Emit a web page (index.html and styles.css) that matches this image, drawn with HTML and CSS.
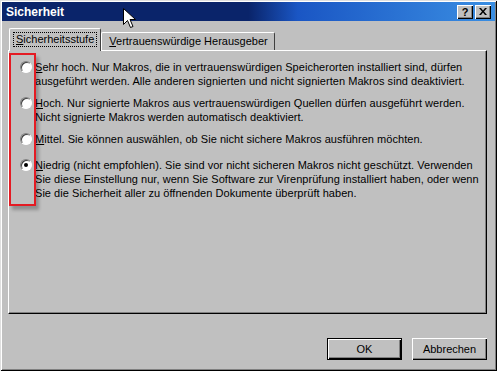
FILE: index.html
```html
<!DOCTYPE html>
<html lang="de">
<head>
    <meta charset="UTF-8">
    <meta name="viewport" content="width=device-width, initial-scale=1.0">
    <title>Sicherheit</title>
    <link rel="stylesheet" href="styles.css">
</head>
<body>
    <div class="window">
        <div class="titlebar">
            <span class="title">Sicherheit</span>
            <div class="caption-buttons">
                <span class="cap-btn">?</span>
                <span class="cap-btn">
                    <svg width="8" height="7" viewBox="0 0 8 7">
                        <path d="M0 0h2l2 2.5L6 0h2L5 3.5 8 7H6L4 4.5 2 7H0l3-3.5z" fill="#000"/>
                    </svg>
                </span>
            </div>
            <svg class="cursor" width="13" height="21" viewBox="0 0 13 21">
                <path d="M0.5 0.5v16l4-4 3 7 2.5-1-3-7h5.5z" fill="#fff" stroke="#000" stroke-width="1"/>
            </svg>
        </div>

        <div class="content">
            <div class="tabs">
                <div class="tab active"><span class="focus"><u>S</u>icherheitsstufe</span></div>
                <div class="tab"><u>V</u>ertrauenswürdige Herausgeber</div>
            </div>

            <div class="panel">
                <div class="options">
                    <div class="option">
                        <span class="radio"></span>
                        <p><u>S</u>ehr hoch. Nur Makros, die in vertrauenswürdigen Speicherorten installiert sind, dürfen<br>ausgeführt werden. Alle anderen signierten und nicht signierten Makros sind deaktiviert.</p>
                    </div>
                    <div class="option">
                        <span class="radio"></span>
                        <p><u>H</u>och. Nur signierte Makros aus vertrauenswürdigen Quellen dürfen ausgeführt werden.<br>Nicht signierte Makros werden automatisch deaktiviert.</p>
                    </div>
                    <div class="option">
                        <span class="radio"></span>
                        <p><u>M</u>ittel. Sie können auswählen, ob Sie nicht sichere Makros ausführen möchten.</p>
                    </div>
                    <div class="option">
                        <span class="radio checked"></span>
                        <p><u>N</u>iedrig (nicht empfohlen). Sie sind vor nicht sicheren Makros nicht geschützt. Verwenden<br>Sie diese Einstellung nur, wenn Sie Software zur Virenprüfung installiert haben, oder wenn<br>Sie die Sicherheit aller zu öffnenden Dokumente überprüft haben.</p>
                    </div>
                </div>
                <div class="highlight"></div>
            </div>

            <div class="footer">
                <button class="button default" type="button">OK</button>
                <button class="button" type="button">Abbrechen</button>
            </div>
        </div>
    </div>
</body>
</html>
```

FILE: styles.css
```css
body {
    margin: 0;
    padding: 0;
    background-color: #c0c0c0;
    font-family: Tahoma, "Liberation Sans", Arial, sans-serif;
    font-size: 11px;
    color: #000;
}

.window {
    width: 497px;
    height: 371px;
    box-sizing: border-box;
    padding: 2px;
    display: flex;
    flex-direction: column;
    background-color: #c0c0c0;
    box-shadow: inset 1px 1px 0 #dfdfdf, inset -1px -1px 0 #000,
                inset 2px 2px 0 #fff, inset -2px -2px 0 #808080;
}

.titlebar {
    position: relative;
    height: 19px;
    flex-shrink: 0;
    display: flex;
    align-items: center;
    justify-content: space-between;
    padding: 0 4px 0 4px;
    background: linear-gradient(to right, #0a246a 0%, #0a246a 50%, #1a56c4 60%, #3a8ee2 100%);
}

.title {
    color: #fff;
    font-weight: bold;
    font-size: 12px;
    padding-top: 1px;
}

.caption-buttons {
    display: flex;
    gap: 2px;
}

.cap-btn {
    width: 16px;
    height: 14px;
    box-sizing: border-box;
    display: flex;
    align-items: center;
    justify-content: center;
    background-color: #c0c0c0;
    font-weight: bold;
    font-size: 11px;
    box-shadow: inset 1px 1px 0 #fff, inset -1px -1px 0 #000, inset -2px -2px 0 #808080;
}

.cursor {
    position: absolute;
    left: 121px;
    top: 6px;
}

.content {
    flex: 1;
    display: flex;
    flex-direction: column;
    padding: 7px 8px 0 6px;
}

.tabs {
    display: flex;
    align-items: flex-end;
    height: 22px;
    padding-left: 1px;
}

.tab {
    height: 18px;
    box-sizing: border-box;
    padding: 2px 6px 0 7px;
    border-top: 1px solid #fff;
    border-left: 1px solid #fff;
    border-right: 1px solid #404040;
    border-radius: 2px 2px 0 0;
    white-space: nowrap;
}

.tab.active {
    height: 23px;
    margin-bottom: -1px;
    padding: 4px 4px 0 4px;
    position: relative;
    z-index: 1;
    background-color: #c0c0c0;
}

.focus {
    display: inline-block;
    padding: 0 2px 1px 2px;
    outline: 1px dotted #000;
}

.panel {
    position: relative;
    height: 264px;
    box-sizing: border-box;
    border-top: 1px solid #fff;
    border-left: 1px solid #fff;
    border-right: 1px solid #000;
    border-bottom: 1px solid #000;
    box-shadow: inset -1px -1px 0 #808080;
    padding: 9px 10px 0 11px;
}

.options {
    display: flex;
    flex-direction: column;
    gap: 8px;
}

.option {
    display: flex;
    align-items: flex-start;
    min-height: 18px;
}

.option p {
    margin: 0;
    line-height: 14px;
    white-space: nowrap;
    letter-spacing: 0.04px;
}

.radio {
    width: 12px;
    height: 12px;
    box-sizing: border-box;
    margin: 1px 3px 0 0;
    flex-shrink: 0;
    border-radius: 50%;
    background-color: #fff;
    border: 1px solid;
    border-color: #808080 #fff #fff #808080;
    box-shadow: inset 1px 1px 0 #404040;
    display: flex;
    align-items: center;
    justify-content: center;
}

.radio.checked::after {
    content: "";
    width: 4px;
    height: 4px;
    border-radius: 50%;
    background-color: #000;
}

.highlight {
    position: absolute;
    left: 0;
    top: 2px;
    width: 27px;
    height: 153px;
    box-sizing: border-box;
    border: 2px solid #e41b23;
    box-shadow: 3px 4px 3px rgba(0, 0, 0, 0.25);
}

.footer {
    display: flex;
    justify-content: flex-end;
    gap: 10px;
    padding-top: 24px;
}

.button {
    width: 75px;
    height: 22px;
    padding: 0;
    font-family: inherit;
    font-size: 11px;
    color: #000;
    background-color: #c0c0c0;
    border: none;
    box-shadow: inset 1px 1px 0 #fff, inset -1px -1px 0 #000, inset -2px -2px 0 #808080;
}

.button.default {
    outline: 1px solid #000;
    outline-offset: -1px;
    box-shadow: inset 2px 2px 0 #fff, inset -2px -2px 0 #000, inset -3px -3px 0 #808080;
}
```
